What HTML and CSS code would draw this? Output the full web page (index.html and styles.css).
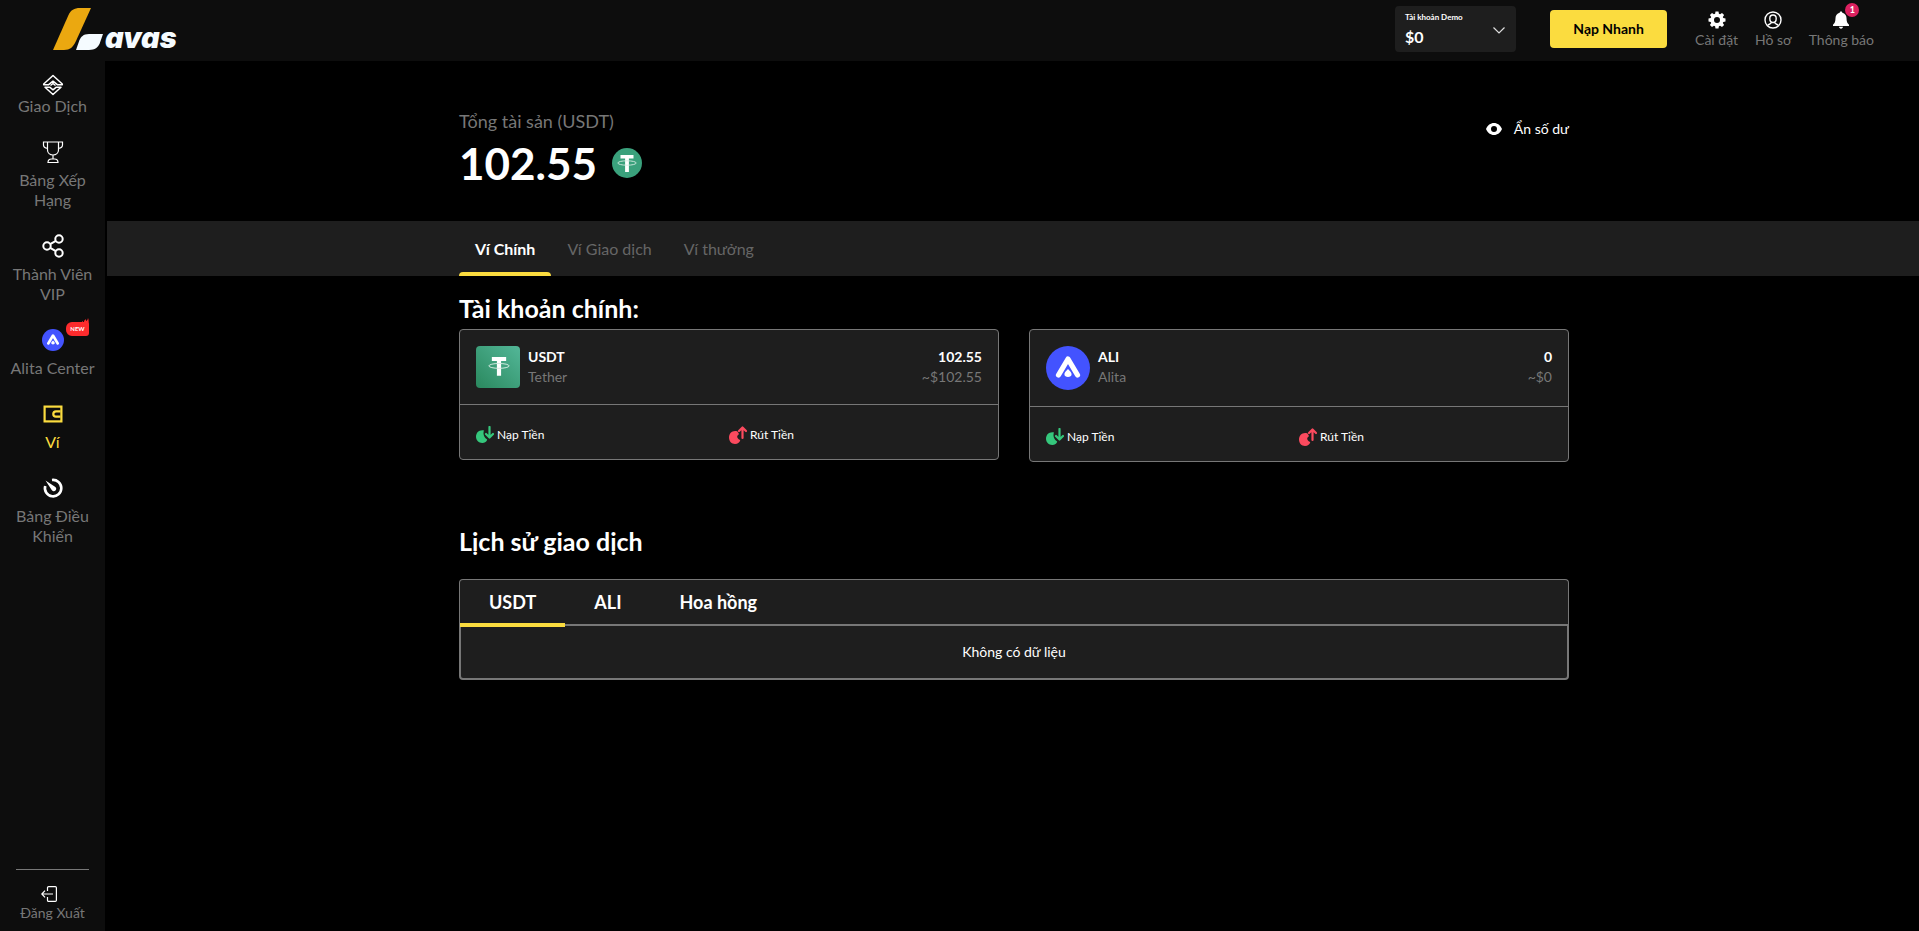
FILE: index.html
```html
<!DOCTYPE html>
<html lang="vi">
  <head>
    <meta charset="UTF-8" />
    <meta name="viewport" content="width=device-width, initial-scale=1.0" />
    <title>Lavas - Ví</title>
    <link rel="stylesheet" href="styles.css">
  </head>
  <body>
    <!-- shared shapes -->
    <svg class="sprite" aria-hidden="true">
      <symbol id="tether" viewBox="0 0 20 20">
        <path fill="#fff" d="M3.5 1h13v3.6h-4.6V18H8.1V4.600H3.500z"/>
        <ellipse cx="10" cy="9" rx="9.200" ry="2.200" fill="none" stroke="#d5ebe2" stroke-width="0.900"/>
      </symbol>
      <symbol id="alita" viewBox="0 0 44 44">
        <circle cx="22" cy="22" r="22" fill="#4353ff"/>
        <path d="M12.500 29 22 13l9.500 16" fill="none" stroke="#fff" stroke-width="5.200" stroke-linecap="round" stroke-linejoin="round"/>
        <path d="M22 23c2 2 3.600 3.500 3.600 5.200S24 31 22 31s-3.600-1.100-3.600-2.800S20 25 22 23z" fill="#fff"/>
      </symbol>
      <symbol id="deposit" viewBox="0 0 18 18">
        <path fill="#35c77c" d="M8 4.500C3.500 3.500 0 6.500 0 10.800 0 14.500 2.900 17 6.200 17c2.600 0 4.600-1.600 5-3.600C8.500 12 6.500 8 8 4.500z"/>
        <path d="M13.500 1v10M10 8l3.500 3.500L17 8" fill="none" stroke="#35c77c" stroke-width="2.200" stroke-linecap="round" stroke-linejoin="round"/>
      </symbol>
      <symbol id="withdraw" viewBox="0 0 18 18">
        <path fill="#fb4a5e" d="M8.500 5.500C4 3.800 0 7 0 11.500 0 15.200 2.600 18 6 18c2.800 0 5-1.700 5.300-4C9.500 13.500 8 12 8.200 10L10 8z"/>
        <path d="M13.500 12V2M10 5l3.500-3.500L17 5" fill="none" stroke="#fb4a5e" stroke-width="2.200" stroke-linecap="round" stroke-linejoin="round"/>
      </symbol>
    </svg>

    <header class="header">
      <a href="#" class="logo" aria-label="Lavas">
        <svg class="logo-mark" viewBox="0 0 50 42">
          <path fill="#eba810" d="M38 0H27c-6 0-9 2-11.500 7L0 42h11c6 0 9-3 11.500-8z"/>
          <path fill="#f5fbff" d="M50 26H36c-6 0-8 3-9.500 6L23 42h13c6 0 9-3 10.500-6z"/>
        </svg>
        <span class="logo-text">avas</span>
      </a>

      <div class="header-right">
        <div class="account">
          <label for="account">Tài khoản Demo</label>
          <select id="account">
            <option>$0</option>
          </select>
          <svg class="account-arrow" viewBox="0 0 12 7"><path d="M.5.5 6 6 11.500.5" fill="none" stroke="#ddd" stroke-width="1.200"/></svg>
        </div>
        <button class="btn-deposit">Nạp Nhanh</button>
        <nav class="header-menu">
          <a href="#">
            <svg viewBox="0 0 18 18">
              <path fill="#fff" fill-rule="evenodd" d="M7.500.5h3l.4 2.200 1.200.5L14 1.900 16.100 4l-1.300 1.900.5 1.200 2.200.4v3l-2.200.4-.5 1.200 1.300 1.900L14 16.100l-1.900-1.300-1.200.5-.4 2.200h-3l-.4-2.200-1.200-.5L4 16.100 1.900 14l1.300-1.900-.5-1.200-2.200-.4v-3l2.200-.4.5-1.200L1.900 4 4 1.900l1.900 1.300 1.200-.5zM9 6a3 3 0 1 0 0 6 3 3 0 0 0 0-6z"/>
            </svg>
            Cài đặt
          </a>
          <a href="#">
            <svg viewBox="0 0 18 18" fill="none" stroke="#fff" stroke-width="1.400">
              <circle cx="9" cy="9" r="8"/>
              <path d="M9 4c2 0 3.200 1.400 3.200 3.500S11 11.500 9 11.500 5.800 9.600 5.800 7.500 7 4 9 4zM3.800 14.500c.5-1.600 3.400-1 3.400-3.300M14.200 14.500c-.5-1.600-3.400-1-3.400-3.300"/>
            </svg>
            Hồ sơ
          </a>
          <a href="#" class="notify">
            <svg viewBox="0 0 18 18"><path fill="#fff" d="M9 .5c.8 0 1.300.5 1.300 1.200C13 2.300 14.500 4.500 14.500 7c0 3.500.8 5.300 2.500 6.800v1.200H1v-1.200C2.700 12.300 3.500 10.500 3.500 7c0-2.500 1.500-4.700 4.200-5.300C7.700 1 8.200.5 9 .5zM7 15.800h4c0 1.100-.9 1.900-2 1.900s-2-.8-2-1.900z"/></svg>
            <span class="badge">1</span>
            Thông báo
          </a>
        </nav>
      </div>
    </header>

    <div class="page">
      <aside class="sidebar">
        <nav class="side-menu">
          <a href="#" class="side-item tight">
            <svg viewBox="0 0 24 24" fill="none" stroke="#fff" stroke-width="1.500" stroke-linejoin="round">
              <path d="M12 2.500 21.300 11v.7h-5L12 8.200l-4.300 3.500h-5V11z"/>
              <path d="M4 14.200h4.700l3.300 2.600 3.300-2.600H20L12 21.500z"/>
              <path d="M9.500 12.500 12 10.500l2.500 2"/>
            </svg>
            <span>Giao Dịch</span>
          </a>
          <a href="#" class="side-item">
            <svg viewBox="0 0 24 24" fill="none" stroke="#fff" stroke-width="1.200">
              <path d="M6.500 2h11v8c0 3-2.500 5-5.500 5s-5.500-2-5.500-5zM6.500 2h-4v3c0 2 1 3 4 3.300M17.500 2h4v3c0 2-1 3-4 3.300M12 15v4M7 22.500c0-2.500 1.500-3.500 3.500-3.500h3c2 0 3.500 1 3.500 3.500z"/>
            </svg>
            <span>Bảng Xếp Hạng</span>
          </a>
          <a href="#" class="side-item">
            <svg viewBox="0 0 24 24" fill="none" stroke="#fff" stroke-width="2">
              <circle cx="6" cy="12" r="3.700"/><circle cx="18" cy="5" r="3.700"/><circle cx="18" cy="19" r="3.700"/>
              <path d="m9.200 10.200 5.600-3.300M9.200 13.800l5.600 3.300"/>
            </svg>
            <span>Thành Viên VIP</span>
          </a>
          <a href="#" class="side-item">
            <svg viewBox="-1 -1 24 24"><use href="#alita" width="22" height="22"/></svg>
            <b class="new">NEW<svg viewBox="0 0 8 7"><path fill="#fc2b2d" d="M0 7c0-2 1-3 1.500-4C2 4 2.500 4 3 4c0-1.500 1-2 1.500-3 .5 1 .5 2 1 2C6.500 2 7 1 7 0c1 2 .5 4 1 7z"/></svg></b>
            <span>Alita Center</span>
          </a>
          <a href="#" class="side-item active">
            <svg viewBox="0 0 24 24" fill="none" stroke="#fbdc3f" stroke-width="2.200">
              <rect x="3.600" y="4.600" width="16.800" height="14.800"/>
              <path d="M19.500 9.300H15a2.700 2.700 0 0 0 0 5.400h4.500"/>
            </svg>
            <span>Ví</span>
          </a>
          <a href="#" class="side-item">
            <svg viewBox="0 0 24 24" fill="none">
              <path d="M11 4a8.200 8.200 0 1 1-6.800 6" stroke="#fff" stroke-width="2.600"/>
              <path d="M4.500 4.500 14 10.800a2.400 2.400 0 1 1-3.300 3.200z" fill="#fff"/>
            </svg>
            <span>Bảng Điều Khiển</span>
          </a>
        </nav>
        <a href="#" class="logout">
          <svg viewBox="0 0 16 16" fill="none" stroke="#fff" stroke-width="1.200">
            <path d="M6.500 5V1.700C6.500 1 7 .6 7.600.6h6.700c.7 0 1.100.5 1.100 1.100v12.600c0 .7-.5 1.100-1.100 1.100H7.600c-.7 0-1.100-.5-1.100-1.100V11M12 8H.8M4 4.700.8 8 4 11.300"/>
          </svg>
          <span>Đăng Xuất</span>
        </a>
      </aside>

      <main class="main">
        <section class="container summary">
          <div>
            <h5>Tổng tài sản (USDT)</h5>
            <div class="total">
              <span>102.55</span>
              <svg viewBox="0 0 30 30"><circle cx="15" cy="15" r="15" fill="#3aa17c"/><use href="#tether" x="5" y="6" width="20" height="20"/></svg>
            </div>
          </div>
          <button class="hide-balance">
            <svg viewBox="0 0 16 12"><path fill="#fff" fill-rule="evenodd" d="M8 0c3.500 0 6.500 2.200 8 6-1.500 3.800-4.500 6-8 6S1.500 9.800 0 6c1.500-3.800 4.500-6 8-6zm0 3a3 3 0 1 0 0 6 3 3 0 0 0 0-6z"/></svg>
            Ẩn số dư
          </button>
        </section>

        <div class="tab-bar">
          <div class="container tabs">
            <button class="active">Ví Chính</button>
            <button>Ví Giao dịch</button>
            <button>Ví thưởng</button>
          </div>
        </div>

        <section class="container">
          <h2>Tài khoản chính:</h2>
          <div class="wallets">
            <article class="wallet">
              <div class="wallet-info">
                <svg class="coin usdt" viewBox="0 0 44 42">
                  <linearGradient id="green" x1="1" y1="0" x2="0" y2="1"><stop offset="0" stop-color="#53b798"/><stop offset="1" stop-color="#2a885e"/></linearGradient>
                  <rect width="44" height="42" rx="4" fill="url(#green)"/>
                  <use href="#tether" x="12" y="10" width="22" height="22"/>
                </svg>
                <div class="coin-name">
                  <b>USDT</b>
                  <span>Tether</span>
                </div>
                <div class="coin-amount">
                  <b>102.55</b>
                  <span>~$102.55</span>
                </div>
              </div>
              <div class="wallet-actions">
                <a href="#"><svg><use href="#deposit"/></svg>Nạp Tiền</a>
                <a href="#"><svg><use href="#withdraw"/></svg>Rút Tiền</a>
              </div>
            </article>
            <article class="wallet">
              <div class="wallet-info">
                <svg class="coin"><use href="#alita"/></svg>
                <div class="coin-name">
                  <b>ALI</b>
                  <span>Alita</span>
                </div>
                <div class="coin-amount">
                  <b>0</b>
                  <span>~$0</span>
                </div>
              </div>
              <div class="wallet-actions">
                <a href="#"><svg><use href="#deposit"/></svg>Nạp Tiền</a>
                <a href="#"><svg><use href="#withdraw"/></svg>Rút Tiền</a>
              </div>
            </article>
          </div>
        </section>

        <section class="container history">
          <h2>Lịch sử giao dịch</h2>
          <div class="history-tabs">
            <button class="active">USDT</button>
            <button>ALI</button>
            <button>Hoa hồng</button>
          </div>
          <p class="history-empty">Không có dữ liệu</p>
        </section>
      </main>
    </div>
  </body>
</html>
```
FILE: styles.css
```css
* {
  box-sizing: border-box;
}
body {
  margin: 0;
  min-height: 100vh;
  display: flex;
  flex-direction: column;
  background: #000;
  color: #fff;
  font-family: Lato, "Noto Sans", sans-serif;
  font-size: 16px;
  line-height: 20px;
}
a {
  color: inherit;
  text-decoration: none;
}
button {
  font: inherit;
  color: inherit;
  background: none;
  border: none;
  padding: 0;
  cursor: pointer;
}
svg {
  display: block;
}
h2,
h5,
p {
  margin: 0;
}
h2 {
  font-size: 25px;
  line-height: 32px;
}
.sprite {
  position: absolute;
  width: 0;
  height: 0;
}

/* header */
.header {
  display: flex;
  justify-content: space-between;
  height: 61px;
  padding: 0 45px 0 53px;
  background: #0d0d0d;
}
.logo {
  display: flex;
  align-items: flex-end;
  height: 52px;
  gap: 2px;
}
.logo-mark {
  width: 50px;
  height: 42px;
  margin-bottom: 2px;
}
.logo-text {
  font-family: Inter, sans-serif;
  font-size: 29px;
  font-weight: 900;
  font-style: italic;
  line-height: 28px;
  color: #f5fbff;
}
.header-right {
  display: flex;
  align-items: flex-start;
}
.account {
  position: relative;
  width: 121px;
  height: 46px;
  margin: 6px 34px 0 0;
  padding: 5px 10px;
  background: #1e1e1e;
  border-radius: 4px;
}
.account label {
  display: block;
  font-size: 8px;
  line-height: 12px;
  font-weight: bold;
}
.account select {
  appearance: none;
  display: block;
  width: 100%;
  height: 26px;
  padding: 0;
  border: none;
  background: none;
  color: #fff;
  font-family: inherit;
  font-size: 16px;
  font-weight: bold;
}
.account-arrow {
  position: absolute;
  right: 11px;
  top: 21px;
  width: 12px;
  height: 7px;
  pointer-events: none;
}
.btn-deposit {
  width: 117px;
  height: 38px;
  margin: 10px 28px 0 0;
  background: #fbdc3f;
  border-radius: 4px;
  color: #000;
  font-size: 14px;
  font-weight: bold;
}
.header-menu {
  display: flex;
  gap: 17px;
  margin-top: 11px;
  color: #777;
  font-size: 14px;
}
.header-menu a {
  position: relative;
}
.header-menu svg {
  width: 18px;
  height: 18px;
  margin: 0 auto 1px;
}
.badge {
  position: absolute;
  left: 50%;
  top: -8px;
  width: 14px;
  height: 14px;
  margin-left: 4px;
  border-radius: 50%;
  background: #dc2160;
  color: #fff;
  font-size: 9px;
  font-weight: bold;
  line-height: 14px;
  text-align: center;
}

/* sidebar */
.page {
  flex: 1;
  display: flex;
  gap: 2px;
}
.sidebar {
  display: flex;
  flex-direction: column;
  justify-content: space-between;
  width: 105px;
  padding: 13px 8px 8px;
  background: #0d0d0d;
  color: #777;
  text-align: center;
}
.side-menu {
  display: flex;
  flex-direction: column;
  gap: 25px;
}
.side-item {
  position: relative;
  display: flex;
  flex-direction: column;
  align-items: center;
  gap: 7px;
}
.side-item.tight {
  gap: 0;
}
.side-item.active {
  color: #fbdc3f;
}
.side-item > svg {
  width: 24px;
  height: 24px;
  margin: -1px 0;
}
.new {
  position: absolute;
  left: 58px;
  top: -7px;
  width: 23px;
  height: 14px;
  border-radius: 6px 3px 3px 6px;
  background: #fc2b2d;
  color: #fff;
  font-size: 6px;
  line-height: 14px;
}
.new svg {
  position: absolute;
  right: 0;
  top: -4px;
  width: 8px;
  height: 7px;
}
.logout {
  display: flex;
  flex-direction: column;
  align-items: center;
  gap: 1px;
  margin: 0 8px;
  padding-top: 16px;
  border-top: 1px solid #777;
  font-size: 14px;
}
.logout svg {
  width: 16px;
  height: 16px;
  margin-right: 8px;
}

/* wallet page */
.main {
  flex: 1;
}
.container {
  max-width: 1140px;
  margin: 0 auto;
  padding: 0 14px 0 16px;
}
.summary {
  display: flex;
  justify-content: space-between;
  align-items: flex-start;
  height: 160px;
  padding-top: 48px;
}
.summary h5 {
  color: #777;
  font-size: 18px;
  font-weight: normal;
  line-height: 24px;
}
.total {
  display: flex;
  align-items: center;
  gap: 15px;
  font-size: 44px;
  font-weight: bold;
  line-height: 60px;
}
.total svg {
  width: 30px;
  height: 30px;
}
.hide-balance {
  display: flex;
  align-items: center;
  gap: 12px;
  margin-top: 10px;
  font-size: 14px;
}
.hide-balance svg {
  width: 16px;
  height: 12px;
}
.tab-bar {
  background: #1e1e1e;
}
.tabs {
  display: flex;
}
.tabs button {
  position: relative;
  height: 55px;
  padding: 0 16px;
  color: #666;
}
.tabs .active {
  color: #fff;
  font-weight: bold;
}
.tabs .active::after {
  content: "";
  position: absolute;
  left: 0;
  right: 0;
  bottom: 0;
  height: 4px;
  border-radius: 4px 4px 0 0;
  background: #fbdc3f;
}
.tab-bar + .container {
  padding-top: 16px;
}
.wallets {
  display: grid;
  grid-template-columns: 1fr 1fr;
  align-items: start;
  gap: 30px;
  margin-top: 5px;
}
.wallet {
  border: 1px solid #777;
  border-radius: 4px;
  background: #1e1e1e;
}
.wallet-info {
  display: flex;
  padding: 16px;
  border-bottom: 1px solid #777;
  font-size: 14px;
}
.coin {
  width: 44px;
  height: 44px;
}
.coin.usdt {
  height: 42px;
}
.coin-name,
.coin-amount {
  display: flex;
  flex-direction: column;
  padding-top: 1px;
}
.coin-name {
  margin-left: 8px;
}
.coin-amount {
  margin-left: auto;
  text-align: right;
}
.wallet-info span {
  color: #777;
}
.wallet-actions {
  display: grid;
  grid-template-columns: 1fr 1fr;
  padding: 20px 16px 14px;
  font-size: 12px;
}
.wallet-actions a {
  display: flex;
  align-items: center;
  gap: 3px;
}
.wallet-actions svg {
  width: 18px;
  height: 18px;
}
.history {
  padding-top: 63px;
}
.history-tabs {
  display: flex;
  height: 45px;
  margin-top: 22px;
  border: 1px solid #777;
  border-bottom: none;
  border-radius: 4px 4px 0 0;
  background: #1e1e1e;
  font-size: 18px;
  font-weight: bold;
}
.history-tabs button {
  position: relative;
  padding: 0 29px;
}
.history-tabs .active::after {
  content: "";
  position: absolute;
  left: 0;
  right: 0;
  bottom: -3px;
  height: 4px;
  background: #fbdc3f;
}
.history-empty {
  padding: 16px;
  border: 2px solid #777;
  border-radius: 0 0 4px 4px;
  background: #1e1e1e;
  font-size: 14px;
  text-align: center;
}
```
